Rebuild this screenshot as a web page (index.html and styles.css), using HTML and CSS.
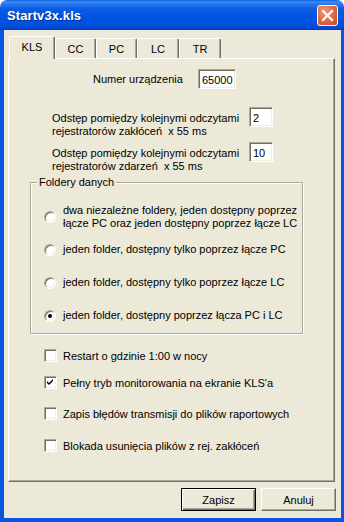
FILE: index.html
```html
<!DOCTYPE html>
<html lang="pl">
<head>
<meta charset="utf-8">
<title>Startv3x.kls</title>
<link rel="stylesheet" href="styles.css">
</head>
<body>
<div class="window">
  <div class="titlebar">
    <span class="title">Startv3x.kls</span>
    <span class="close">
      <svg width="13" height="13" viewBox="0 0 13 13"><path d="M2 2 L11 11 M11 2 L2 11" stroke="#fff" stroke-width="2.2" stroke-linecap="square"/></svg>
    </span>
  </div>
  <div class="frame">
    <div class="tabs">
      <div class="tab active w46">KLS</div>
      <div class="tab w41">CC</div>
      <div class="tab w41">PC</div>
      <div class="tab w42">LC</div>
      <div class="tab w42">TR</div>
    </div>
    <div class="panel">
      <div class="num-row">
        <span class="num-label">Numer urządzenia</span>
        <span class="edit w38">65000</span>
      </div>
      <div class="int-row">
        <div class="int-label">Odstęp pomiędzy kolejnymi odczytami<br>rejestratorów zakłóceń&nbsp; x 55 ms</div>
        <span class="edit w24">2</span>
      </div>
      <div class="int-row">
        <div class="int-label">Odstęp pomiędzy kolejnymi odczytami<br>rejestratorów zdarzeń&nbsp; x 55 ms</div>
        <span class="edit w24">10</span>
      </div>
      <fieldset class="group">
        <legend>Foldery danych</legend>
        <div class="opt"><span class="radio"></span><span class="opt-text">dwa niezależne foldery, jeden dostępny poprzez<br>łącze PC oraz jeden dostępny poprzez łącze LC</span></div>
        <div class="opt"><span class="radio"></span><span class="opt-text">jeden folder, dostępny tylko poprzez łącze PC</span></div>
        <div class="opt"><span class="radio"></span><span class="opt-text">jeden folder, dostępny tylko poprzez łącze LC</span></div>
        <div class="opt"><span class="radio on"><span class="dot"></span></span><span class="opt-text">jeden folder, dostępny poprzez łącza PC i LC</span></div>
      </fieldset>
      <div class="check c1"><span class="box"></span><span>Restart o gdzinie 1:00 w nocy</span></div>
      <div class="check c2"><span class="box"><svg width="9" height="9" viewBox="0 0 9 9"><path d="M1 3 L3 5 L7 1 L7 3 L3 7 L1 5 Z" fill="#000"/></svg></span><span>Pełny tryb monitorowania na ekranie KLS'a</span></div>
      <div class="check c3"><span class="box"></span><span>Zapis błędów transmisji do plików raportowych</span></div>
      <div class="check c4"><span class="box"></span><span>Blokada usunięcia plików z rej. zakłóceń</span></div>
    </div>
    <div class="buttons">
      <div class="btn default"><span class="btn-in">Zapisz</span></div>
      <div class="btn"><span class="btn-in">Anuluj</span></div>
    </div>
  </div>
</div>
</body>
</html>
```

FILE: styles.css
```css
* { box-sizing: border-box; }
html, body { margin: 0; padding: 0; background: #fff; }
body { font-family: "Liberation Sans", Arial, sans-serif; font-size: 11px; color: #000; }

.window { width: 344px; height: 522px; display: flex; flex-direction: column; }

.titlebar {
  height: 30px;
  display: flex;
  align-items: center;
  justify-content: space-between;
  padding: 0 6px 0 7px;
  border-radius: 7px 7px 0 0;
  background: linear-gradient(to bottom, #0A5FE6 0px, #3C8CF6 2px, #2A79F0 4px, #0B5BE3 9px, #0055E5 16px, #0152DE 24px, #0047D2 28px, #003CC0 30px);
}
.title {
  color: #fff;
  font-weight: bold;
  font-size: 13px;
  letter-spacing: 0.1px;
  text-shadow: 1px 1px 0 #0A2E8A;
}
.close {
  width: 21px; height: 21px;
  border: 1px solid #fff;
  border-radius: 3px;
  background: radial-gradient(circle at 35% 30%, #F09A7C 0%, #E0704D 45%, #C8461F 100%);
  display: flex; align-items: center; justify-content: center;
}

.frame {
  flex: 1;
  background: #ECE9D8;
  border-left: 4px solid #0755E2;
  border-right: 3px solid #0755E2;
  border-bottom: 4px solid #0755E2;
  display: flex;
  flex-direction: column;
}

.tabs {
  height: 22px;
  margin-top: 6px;
  margin-left: 5px;
  display: flex;
  align-items: flex-end;
}
.tab {
  height: 20px;
  display: flex;
  align-items: center;
  justify-content: center;
  padding-top: 1px;
  border-top: 1px solid #fff;
  border-left: 1px solid #fff;
  border-right: 1px solid #716F64;
  border-radius: 2px 2px 0 0;
  box-shadow: inset -1px 0 0 #ACA899;
  background: #ECE9D8;
}
.tab.active {
  height: 23px;
  margin-bottom: -1px;
  padding-bottom: 3px;
  position: relative;
}
.w46 { width: 46px; }
.w41 { width: 41px; }
.w42 { width: 42px; }

.panel {
  margin-left: 4px;
  width: 327px;
  height: 424px;
  border-top: 1px solid #fff;
  border-left: 1px solid #fff;
  border-right: 1px solid #716F64;
  border-bottom: 1px solid #716F64;
  box-shadow: inset -1px -1px 0 #ACA899;
  padding: 0;
}

.edit {
  height: 20px;
  display: flex;
  align-items: center;
  padding-left: 3px;
  padding-top: 1px;
  background: #fff;
  border-top: 1px solid #ACA899;
  border-left: 1px solid #ACA899;
  border-right: 1px solid #fff;
  border-bottom: 1px solid #fff;
  box-shadow: inset 1px 1px 0 #716F64, inset -1px -1px 0 #F1EFE2;
}
.w38 { width: 38px; }
.w24 { width: 24px; }

.num-row {
  margin-top: 10px;
  padding-left: 84px;
  display: flex;
  align-items: center;
  height: 20px;
}
.num-label { width: 105px; }

.int-row {
  display: flex;
  align-items: flex-start;
  height: 35px;
  padding-left: 43px;
}
.num-row + .int-row { margin-top: 18px; }
.int-label {
  width: 197px;
  line-height: 13px;
  padding-top: 5px;
}

.group {
  margin: -1px 0 0 21px;
  width: 273px;
  height: 158px;
  padding: 11px 0 0 0;
  border: 1px solid #ACA899;
  box-shadow: inset 1px 1px 0 #fff, 1px 1px 0 #fff;
}
.group legend {
  padding: 0 2px;
  margin-left: 6px;
  line-height: 13px;
  background: #ECE9D8;
}
.opt {
  height: 33px;
  display: flex;
  align-items: center;
  padding-left: 13px;
}
.opt-text { line-height: 13px; padding-left: 7px; }
.radio {
  width: 12px; height: 12px;
  border-radius: 50%;
  background: #fff;
  border: 1px solid;
  border-color: #ACA899 #fff #fff #ACA899;
  box-shadow: inset 1px 1px 0 #716F64, inset -1px -1px 0 #F1EFE2;
  display: flex; align-items: center; justify-content: center;
  flex: none;
}
.dot { width: 4px; height: 4px; border-radius: 50%; background: #000; }

.check {
  display: flex;
  align-items: center;
  height: 15px;
  padding-left: 35px;
}
.check .box {
  width: 13px; height: 13px;
  margin-right: 6px;
  background: #fff;
  border: 1px solid;
  border-color: #ACA899 #fff #fff #ACA899;
  box-shadow: inset 1px 1px 0 #716F64, inset -1px -1px 0 #F1EFE2;
  display: flex; align-items: center; justify-content: center;
  flex: none;
}
.c1 { margin-top: 14px; }
.c2 { margin-top: 12px; }
.c3 { margin-top: 16px; }
.c4 { margin-top: 17px; }

.buttons {
  margin-top: 6px;
  display: flex;
  justify-content: flex-end;
  gap: 5px;
  padding-right: 5px;
}
.btn {
  width: 75px; height: 23px;
  border-top: 1px solid #fff;
  border-left: 1px solid #fff;
  border-right: 1px solid #716F64;
  border-bottom: 1px solid #716F64;
  box-shadow: inset -1px -1px 0 #ACA899;
  display: flex; align-items: center; justify-content: center;
}
.btn.default {
  border: 1px solid #000;
  box-shadow: inset 1px 1px 0 #fff, inset -1px -1px 0 #716F64, inset -2px -2px 0 #ACA899;
}
.btn-in { padding-top: 1px; }
```
